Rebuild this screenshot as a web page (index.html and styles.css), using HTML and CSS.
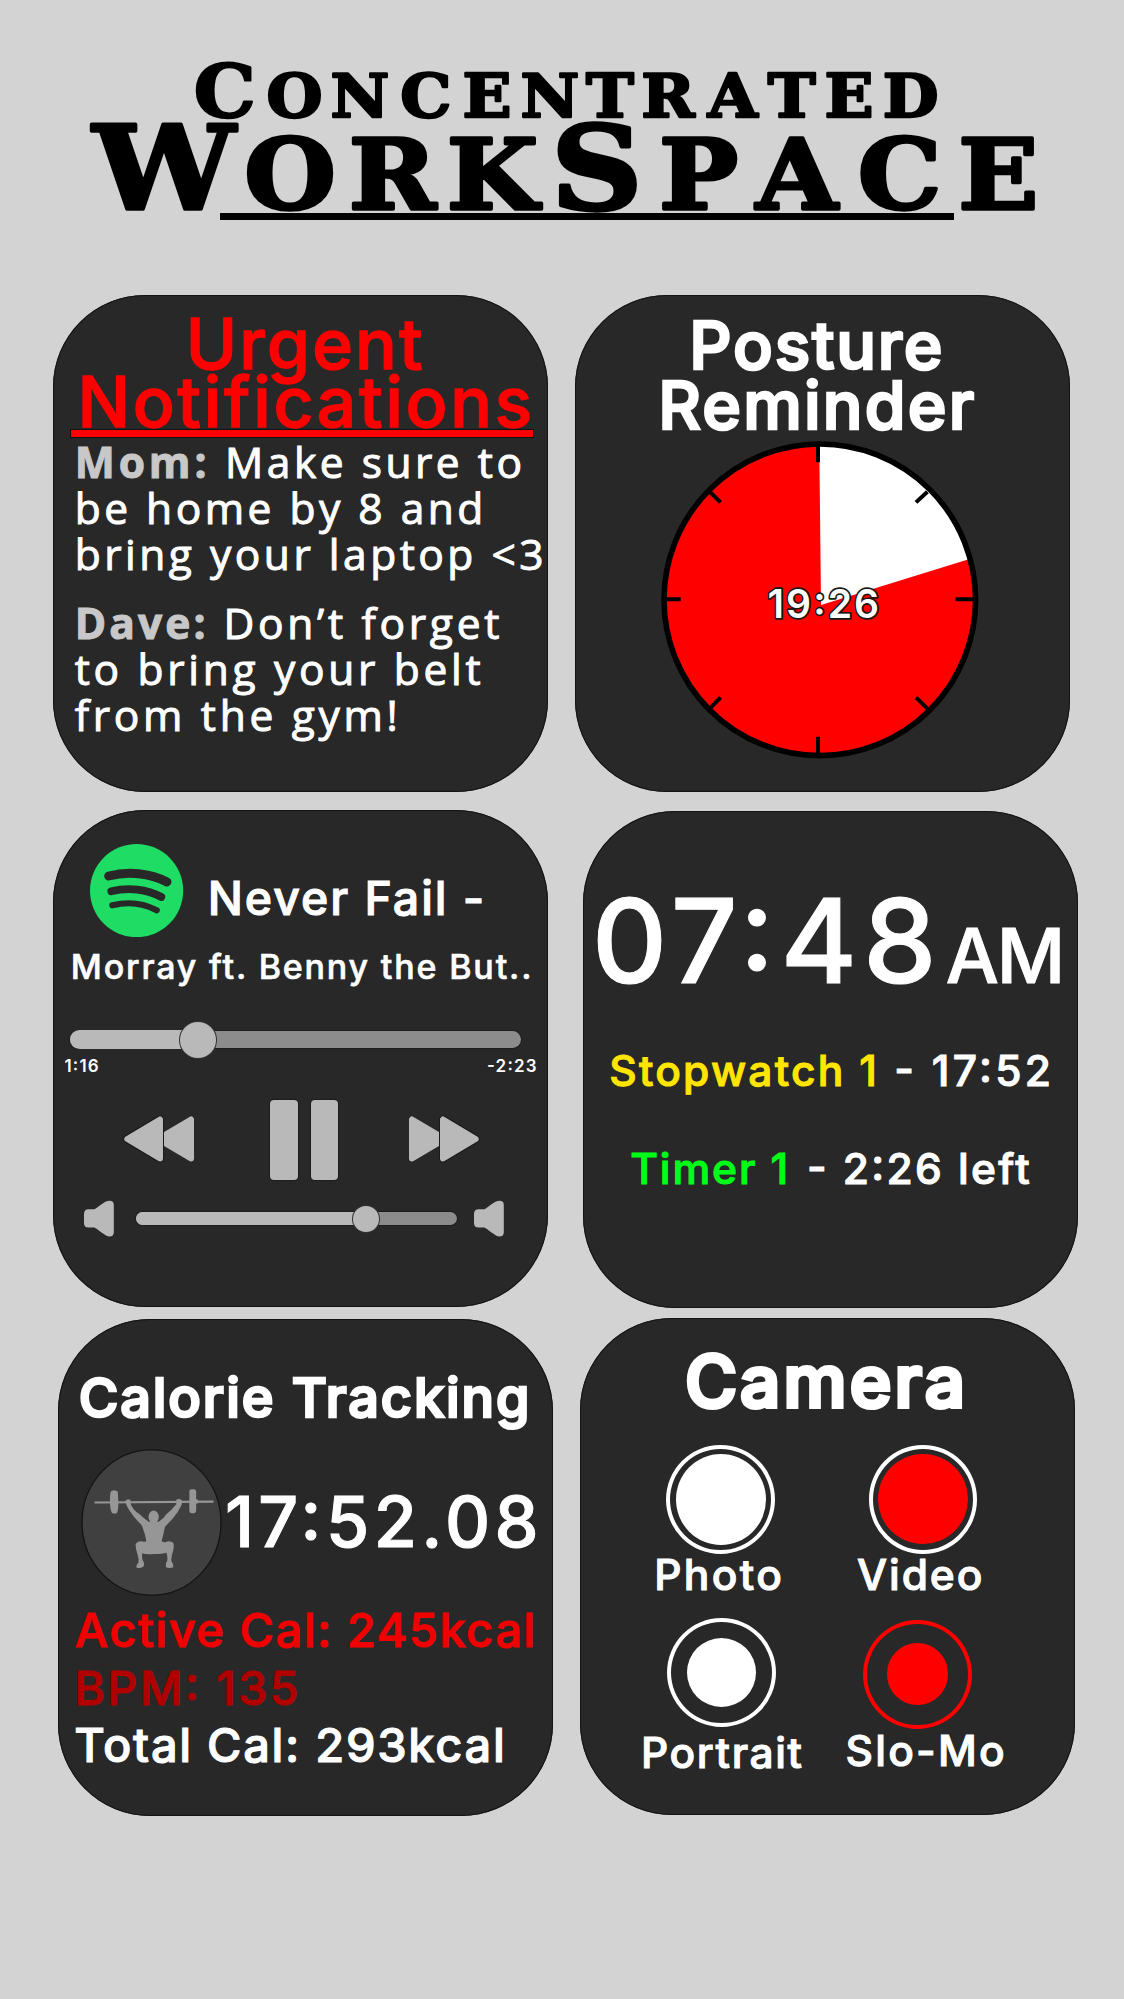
FILE: index.html
```html
<!DOCTYPE html>
<html lang="en">
<head>
<meta charset="utf-8">
<title>Concentrated WorkSpace</title>
<link rel="stylesheet" href="styles.css">
</head>
<body>
<header class="masthead">
  <svg class="wordmark" width="1124" height="240" viewBox="0 0 1124 240" role="img" aria-label="Concentrated WorkSpace">
    <text class="wm-text" transform="scale(1.08 1)" y="117" x="179.3 246.8 306 370.7 428.3 482 542.7 593.8 655.3 710.8 763.5 817.4"><tspan class="wm-top-cap">C</tspan><tspan class="wm-top">ONCENTRATED</tspan></text>
    <text class="wm-text wm-heavy" transform="scale(1.09 1)" y="209.500" x="85.1 224.2 319.9 409.9 505.500 604.600 693.500 786.900 879.100"><tspan class="wm-main-cap">W</tspan><tspan class="wm-main">ORK</tspan><tspan class="wm-main-cap">S</tspan><tspan class="wm-main">PACE</tspan></text>
    <rect x="220" y="213" width="734" height="7"/>
  </svg>
</header>
<main>
  <div class="row row-1">
    <section class="card">
      <h2 class="line urgent-1">Urgent</h2>
      <h2 class="line urgent-2">Notifications</h2>
      <div class="urgent-bar"></div>
      <p class="msg"><b>Mom:</b> Make sure to<br>be home by 8 and<br>bring your laptop &lt;3</p>
      <p class="msg msg-2"><b>Dave:</b> Don’t forget<br>to bring your belt<br>from the gym!</p>
    </section>
    <section class="card">
      <h2 class="line posture-1">Posture</h2>
      <h2 class="line posture-2">Reminder</h2>
      <svg class="dial" width="318" height="318" viewBox="0 0 318 318">
        <circle cx="158.8" cy="158.8" r="155" fill="#f00"/>
        <path d="M160 163.9 158.3 4A155 155 0 0 1 307 118.6Z" fill="#fff"/>
        <circle cx="158.8" cy="158.8" r="155.8" fill="none" stroke="#000" stroke-width="5.6"/>
        <path d="M157 4V21.2M157 295.7V314M5 158.3H19.7M294.5 158.3H312" stroke="#000" stroke-width="4"/>
        <path d="M48.7 50.7 59.6 61.4M266.4 50.7 255 61.4M48.7 267.6 59.6 256.4M267.4 268.7 255 256.4" stroke="#000" stroke-width="4"/>
        <text class="dial-time" x="106.5" y="176.9">19:26</text>
      </svg>
    </section>
  </div>
  <div class="row row-2">
    <section class="card">
      <div class="track-head">
        <svg width="93.3" height="93.3" viewBox="0 0 93.3 93.3" fill="none" stroke="#282828" stroke-linecap="round">
          <circle cx="46.6" cy="46.6" r="46.6" fill="#1fdc64" stroke="none"/>
          <path d="M18.7 32C38 27 60 29 77 38" stroke-width="9"/>
          <path d="M21.3 47.3C38 43 57 45 71.3 53" stroke-width="7.8"/>
          <path d="M22.3 61.3C38 57.5 54 59.5 66.7 66.3" stroke-width="6.2"/>
        </svg>
        <h3 class="line track-title">Never Fail -</h3>
      </div>
      <p class="line artist">Morray ft. Benny the But..</p>
      <div class="slider progress"><i class="fill"></i><i class="thumb"></i></div>
      <div class="times"><span>1:16</span><span>-2:23</span></div>
      <div class="controls">
        <svg width="72" height="48" viewBox="0 0 72 48" fill="#b9b9b9" stroke="#b9b9b9" stroke-linejoin="round" stroke-width="6">
          <path d="M35 24 68 4.5V43.5Z"/>
          <path d="M4.3 24 37 4.5V43.5Z" stroke="#1a1a1a" stroke-width="8"/>
          <path d="M4.3 24 37 4.5V43.5Z"/>
        </svg>
        <div class="pause"><i></i><i></i></div>
        <svg width="72" height="48" viewBox="0 0 72 48" fill="#b9b9b9" stroke="#b9b9b9" stroke-linejoin="round" stroke-width="6">
          <path d="M37 24 4 4.5V43.5Z"/>
          <path d="M67.7 24 35 4.5V43.5Z" stroke="#1a1a1a" stroke-width="8"/>
          <path d="M67.7 24 35 4.5V43.5Z"/>
        </svg>
      </div>
      <div class="volume-row">
        <svg width="32" height="37" viewBox="0 0 32 37" fill="#b9b9b9"><path d="M5.5 9.3H11.5C17 6 22 .8 26.5 .8Q30.8 .8 30.8 5V32.2Q30.8 36.4 26.5 36.4C22 36.4 17 30.5 11.5 27.5H5.5Q1 27.5 1 23V14Q1 9.3 5.5 9.3Z"/></svg>
        <div class="slider volume"><i class="fill"></i><i class="thumb"></i></div>
        <svg width="32" height="37" viewBox="0 0 32 37" fill="#b9b9b9"><path d="M5.5 9.3H11.5C17 6 22 .8 26.5 .8Q30.8 .8 30.8 5V32.2Q30.8 36.4 26.5 36.4C22 36.4 17 30.5 11.5 27.5H5.5Q1 27.5 1 23V14Q1 9.3 5.5 9.3Z"/></svg>
      </div>
    </section>
    <section class="card">
      <div class="clock"><span class="clock-time">07:48</span><span class="clock-ampm">AM</span></div>
      <p class="line stopwatch"><span class="yellow">Stopwatch 1</span> <span class="sw-val">- 17:52</span></p>
      <p class="line timer"><span class="green">Timer 1</span> <span class="tm-val">- 2:26 left</span></p>
    </section>
  </div>
  <div class="row row-3">
    <section class="card">
      <h2 class="line calorie-title">Calorie Tracking</h2>
      <div class="workout">
        <svg width="140.5" height="147" viewBox="33 27 421.5 441" fill="#969696" stroke="#969696" stroke-linejoin="round">
          <ellipse cx="244.5" cy="247.5" rx="208.5" ry="218" fill="#404040" stroke="#141414" stroke-width="4"/>
          <path d="M76 187.5 428 185" stroke-width="6.5" stroke-linecap="round"/>
          <path d="M124 153Q132 149 141 153Q144 154 144 165L145 190Q145 212 141 219Q133 224 126 219Q121 212 120 190Q119 155 124 153Z" stroke="none"/>
          <rect x="358" y="147.5" width="20.5" height="72" rx="7" stroke="none"/>
          <rect x="374" y="178" width="10" height="13" rx="4" stroke="none"/>
          <path d="M166 182Q174 174 181 180L183 194Q190 211 207 221Q222 235 236 245L266 245Q281 237 289 223Q304 211 319 193L319 179Q328 175 335 180Q338 189 333 198Q324 218 309 235Q295 250 285 260L280 283 275 303Q281 309 290 305Q303 302 310 309Q313 320 309 334Q304 347 304 358Q303 364 309 372L310 382Q298 386 288 382Q286 371 292 361Q293 348 289 338Q278 342 253 342Q228 344 217 340Q215 352 218 361Q224 367 221 379Q215 386 200 383Q197 376 205 368Q207 358 203 345Q196 325 197 312Q202 303 213 304Q225 306 229 304Q226 283 219 266Q216 254 208 248Q190 230 179 212Q167 194 166 182Z" stroke="none"/>
          <ellipse cx="251" cy="231" rx="15.5" ry="19.5" stroke="none"/>
        </svg>
        <span class="line workout-time">17:52.08</span>
      </div>
      <p class="line active-cal">Active Cal: 245kcal</p>
      <p class="line bpm">BPM: 135</p>
      <p class="line total-cal">Total Cal: 293kcal</p>
    </section>
    <section class="card">
      <h2 class="line camera-title">Camera</h2>
      <div class="modes modes-1">
        <div class="mode photo"><div class="ring"><i></i></div><span>Photo</span></div>
        <div class="mode video"><div class="ring"><i></i></div><span>Video</span></div>
      </div>
      <div class="modes modes-2">
        <div class="mode portrait"><div class="ring"><i></i></div><span>Portrait</span></div>
        <div class="mode slomo"><div class="ring"><i></i></div><span>Slo-Mo</span></div>
      </div>
    </section>
  </div>
</main>
</body>
</html>
```
FILE: styles.css
```css
* { box-sizing: border-box; }
body {
  margin: 0;
  width: 1124px;
  min-height: 1999px;
  background: #d3d3d3;
  color: #fff;
  font-family: Inter, "Liberation Sans", sans-serif;
  font-weight: 500;
  font-feature-settings: "calt" 1;
  -webkit-text-stroke: 1px currentColor;
}
h2, h3, p { margin: 0; font-weight: 500; }
svg { display: block; flex: none; }
i { display: block; }

.masthead { height: 295px; }
.wm-text {
  font-family: "DejaVu Serif", serif; font-weight: 700;
  fill: #000; stroke: #000; stroke-width: 2.4px; stroke-linejoin: round;
  -webkit-text-stroke: 2.4px #000;
}
.wm-heavy { stroke-width: 3.4px; -webkit-text-stroke: 3.4px #000; }
.wm-top-cap { font-size: 72px; }
.wm-top { font-size: 59.5px; }
.wm-main-cap { font-size: 116.5px; }
.wm-main { font-size: 96.5px; }

.row { display: flex; }
.row-1 { padding-left: 53px; gap: 27px; }
.row-2 { padding-left: 53px; gap: 35px; margin-top: 18px; }
.row-3 { padding-left: 57.5px; gap: 27.5px; margin-top: 11px; }
.row-2 .card:last-child { margin-top: 1px; }
.row-3 .card:last-child { margin-top: -1px; }

.card {
  width: 495px;
  height: 497px;
  flex: none;
  display: flex;
  flex-direction: column;
  align-items: flex-start;
  border-radius: 92px;
  background: #282828;
  box-shadow: inset 0 0 0 1px #141414;
}
.line { line-height: 1; white-space: nowrap; flex: none; }

/* Urgent notifications */
.urgent-1, .urgent-2 { font-size: 69.5px; color: #f00; -webkit-text-stroke: 1.4px #f00; }
.urgent-1 { margin: 15.2px 0 0 132.8px; letter-spacing: 2.1px; }
.urgent-2 { margin: -12px 0 0 24.4px; letter-spacing: 2.7px; }
.urgent-bar { width: 463.5px; height: 9.5px; margin: -8.7px 0 0 17.4px; background: #f00; border: 1px solid #111; flex: none; }
.msg {
  margin: .8px 0 0 21.7px;
  font: 400 42.5px/46.2px "Open Sans", sans-serif;
  letter-spacing: 3.5px;
  white-space: nowrap;
}
.msg b { font-weight: 700; color: #c8c8c8; letter-spacing: 3.9px; }
.msg-2 { margin-top: 22.6px; letter-spacing: 3.7px; }
.msg-2 b { letter-spacing: 3.1px; }

/* Posture reminder */
.posture-1, .posture-2 { font-size: 66px; -webkit-text-stroke: 2.6px #fff; }
.posture-1 { margin: 16.5px 0 0 114.3px; letter-spacing: 1.8px; }
.posture-2 { margin: -5.4px 0 0 83.2px; letter-spacing: 2.2px; }
.dial { margin: 2.5px 0 0 86px; }
.dial-time {
  font-size: 39px; font-weight: 600; letter-spacing: 2.1px;
  fill: #fff; stroke: #181818; stroke-width: 3.4px; paint-order: stroke; stroke-linejoin: round;
  -webkit-text-stroke: 3.4px #181818;
}

/* Music player */
.track-head { display: flex; padding-left: 37.4px; margin-top: 33.7px; gap: 24px; height: 93.3px; flex: none; }
.track-title { font-size: 46.5px; letter-spacing: 1.94px; margin-top: 31.3px; }
.artist { font-size: 34px; letter-spacing: 1.82px; margin: 12.8px 0 0 17.8px; -webkit-text-stroke-width: .6px; }
.slider { position: relative; background: #8c8c8c; flex: none; box-shadow: 0 0 0 1px #1c1c1c; }
.slider .fill { position: absolute; left: 0; background: #b9b9b9; }
.slider .thumb { position: absolute; border-radius: 50%; background: #b9b9b9; box-shadow: 0 0 0 1px #333; }
.progress { width: 451px; height: 17.3px; border-radius: 9px; margin: 47.2px 0 0 17.4px; }
.progress .fill { top: -1px; width: 127px; height: 19.3px; border-radius: 10px 0 0 10px; }
.progress .thumb { left: 109.2px; top: -9px; width: 36.5px; height: 36px; }
.times {
  display: flex; justify-content: space-between; align-self: stretch; flex: none;
  margin: 9.7px 10.2px 0 11.4px;
  font-size: 17px; line-height: 17px; font-weight: 600; letter-spacing: 1.2px;
  -webkit-text-stroke-width: 0;
}
.controls { display: flex; align-items: center; height: 80px; margin: 25px 0 0 70px; flex: none; }
.controls svg { margin-top: -2px; }
.pause { display: flex; gap: 13px; margin: 0 69.8px 0 75px; }
.pause i { width: 27.5px; height: 80px; border-radius: 4px; background: #b9b9b9; box-shadow: 0 0 0 1px #1c1c1c; }
.volume-row { display: flex; align-items: center; height: 37px; margin: 20px 0 0 30px; flex: none; }
.volume { width: 321.5px; height: 13.3px; border-radius: 7px; margin: 0 15.5px 0 20.5px; }
.volume .fill { top: 0; width: 230px; height: 13.3px; border-radius: 7px 0 0 7px; }
.volume .thumb { left: 217.5px; top: -6.3px; width: 26px; height: 26px; }

/* Clock */
.clock { display: flex; align-items: baseline; height: 117px; margin: 70.6px 0 0 8.8px; line-height: 1; flex: none; }
.clock-time { width: 354px; font-size: 117px; letter-spacing: 5.7px; }
.clock-ampm { font-size: 75px; letter-spacing: -2.2px; }
.stopwatch, .timer { font-size: 42.5px; }
.stopwatch { margin: 51.9px 0 0 26.2px; letter-spacing: 2.25px; }
.sw-val { letter-spacing: 3.31px; margin-left: 1.5px; }
.timer { margin: 55.5px 0 0 47.2px; letter-spacing: 1.91px; }
.tm-val { letter-spacing: 2.38px; margin-left: 3.5px; }
.yellow { color: #ffe500; }
.green { color: #00ff18; }

/* Calorie tracking */
.calorie-title { font-size: 54px; letter-spacing: 1.9px; -webkit-text-stroke: 2.6px #fff; margin: 51.9px 0 0 21.2px; }
.workout { display: flex; margin: 24.3px 0 0 23.7px; gap: 3.2px; height: 147px; flex: none; }
.workout-time { font-size: 70px; letter-spacing: 4.4px; margin-top: 37.5px; }
.active-cal, .bpm, .total-cal { font-size: 47px; }
.active-cal { color: #f00000; letter-spacing: 1.5px; margin: 10.1px 0 0 17.3px; }
.bpm { color: #b00000; letter-spacing: 2.25px; margin: 10.3px 0 0 16.7px; }
.total-cal { letter-spacing: 1.69px; margin: 10.7px 0 0 16.7px; }

/* Camera */
.camera-title { font-size: 71px; letter-spacing: 3.1px; -webkit-text-stroke: 4.2px #fff; margin: 28.3px 0 0 104.9px; }
.modes { display: flex; flex: none; }
.modes-1 { margin: 27.4px 0 0 74.2px; gap: 72.8px; }
.modes-2 { margin: 21.5px 0 0 61px; gap: 41.9px; }
.mode { display: flex; flex-direction: column; align-items: flex-start; }
.mode span { font-size: 42.5px; line-height: 1; white-space: nowrap; position: relative; top: .5px; }
.ring {
  display: flex; align-items: center; justify-content: center;
  width: 108.7px; height: 109px; border: 4px solid #fff; border-radius: 50%;
}
.ring i { border-radius: 50%; background: #fff; flex: none; }
.photo { width: 130px; letter-spacing: 2.36px; }
.photo .ring { margin-left: 12.1px; }
.photo i { width: 90px; height: 91px; }
.video { letter-spacing: 1.91px; }
.video .ring { margin-left: 11.8px; }
.video i { width: 89.5px; height: 90px; background: #f00; }
.portrait { width: 162.6px; letter-spacing: 1.59px; }
.portrait .ring { margin-left: 26px; margin-bottom: 4.7px; }
.portrait i { width: 69.3px; height: 69.3px; }
.slomo { letter-spacing: 2.25px; margin-top: 2px; }
.slomo .ring { margin-left: 17.5px; margin-bottom: .7px; border-color: #f00; }
.slomo i { width: 61.5px; height: 61.5px; background: #f00; }
```
